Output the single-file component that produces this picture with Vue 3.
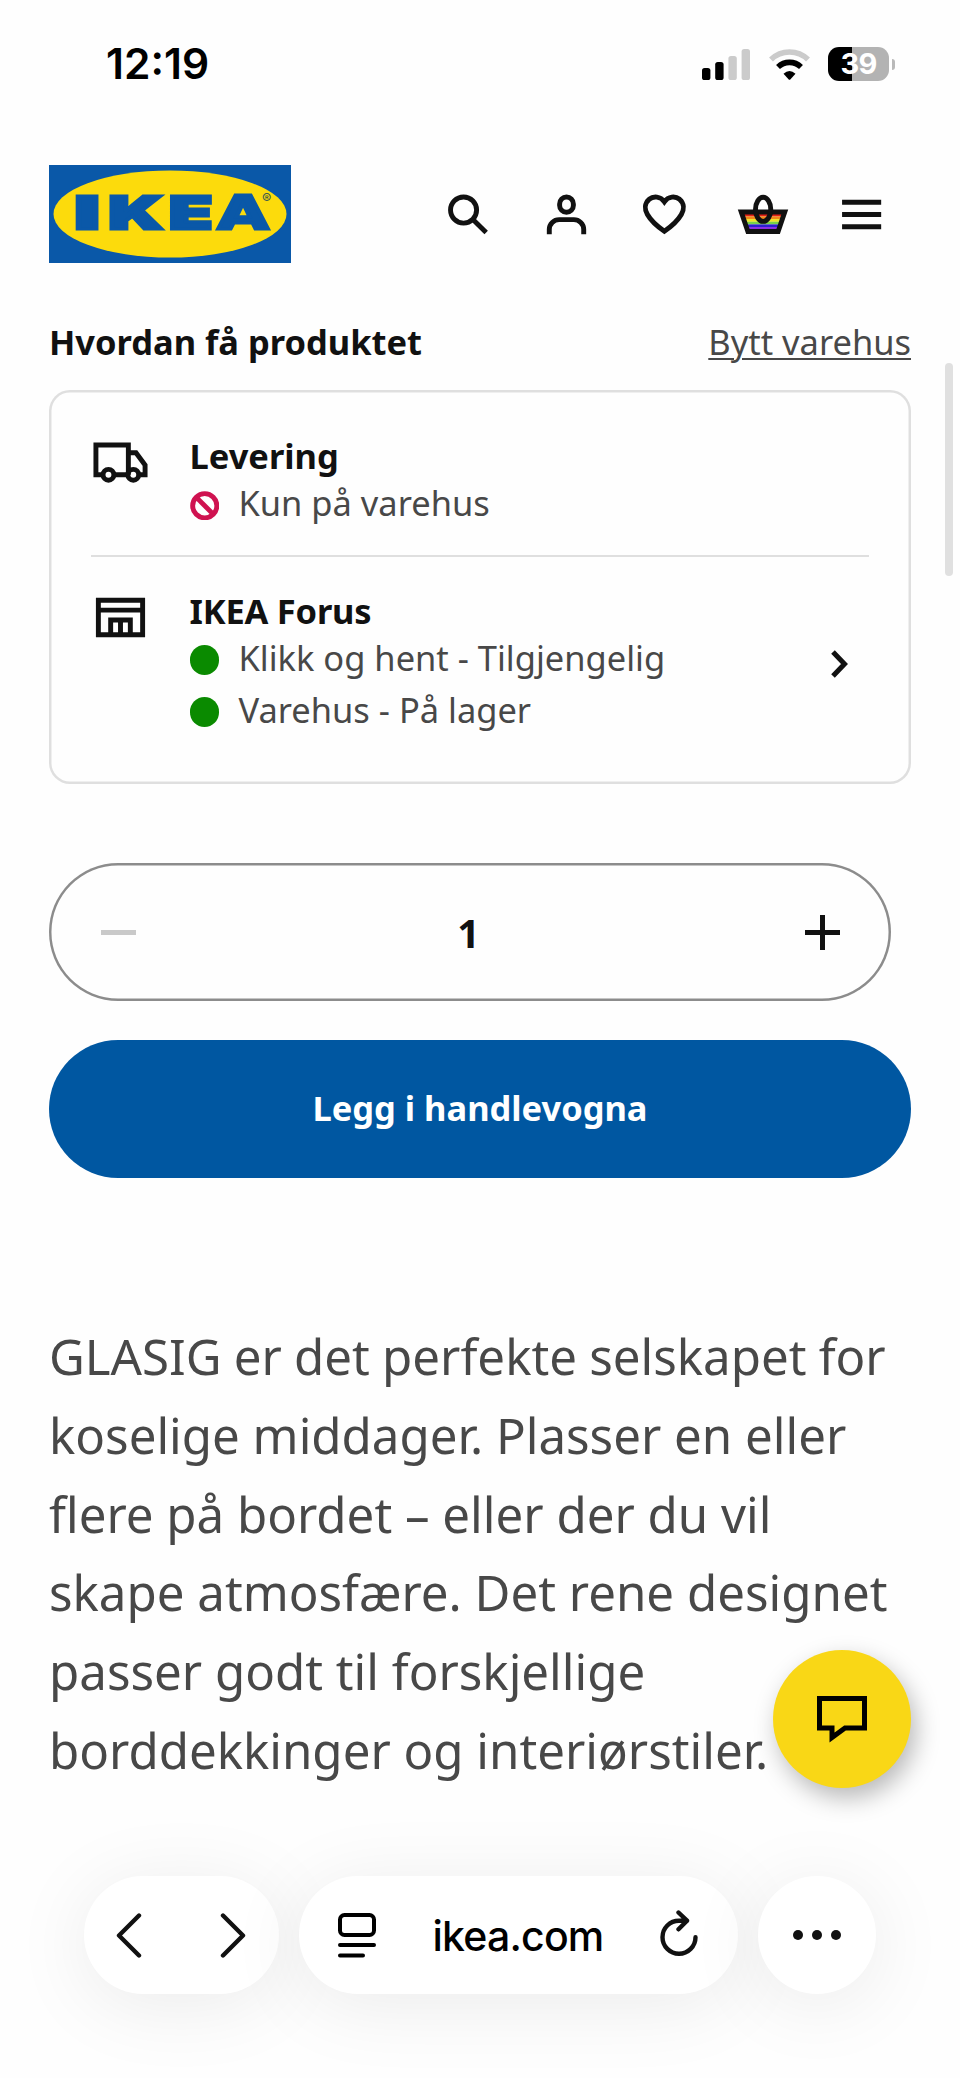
<script setup>
const stock = [
  { label: 'Klikk og hent - Tilgjengelig' },
  { label: 'Varehus - På lager' },
]
const signal = [
  { x: 0, y: 19, on: true },
  { x: 13.2, y: 13, on: true },
  { x: 26.4, y: 7, on: false },
  { x: 39.6, y: 0, on: false },
]
const logoLetters = [
  { ch: 'I', x: 25.4, w: 25.2 },
  { ch: 'K', x: 59.6, w: 54.6 },
  { ch: 'E', x: 120.1, w: 43.5 },
  { ch: 'A', x: 168.7, w: 50.6, wide: true },
]
const stripes = ['#e22016', '#f28917', '#efe524', '#78d24a', '#2c1fd0', '#8a2be2']
</script>

<template>
  <div class="screen">
    <div class="status">
      <span class="clock">12:19</span>
      <div class="status-icons">
        <svg class="signal" viewBox="0 0 48 31">
          <rect v-for="b in signal" :key="b.x" :x="b.x" :y="b.y" width="8.4" :height="31 - b.y" rx="2.6" :fill="b.on ? '#000' : '#cbcbcb'" />
        </svg>
        <svg class="wifi" viewBox="0 0 41 31">
          <path d="M2 10.5 A26.5 26.5 0 0 1 39 10.5" fill="none" stroke="#cbcbcb" stroke-width="5.6" />
          <path d="M9 18 A16.5 16.5 0 0 1 32 18" fill="none" stroke="#000" stroke-width="5.6" />
          <path d="M14.5 24.8 Q20.5 19.2 26.5 24.8 L21.5 30.2 Q20.5 31.2 19.5 30.2 Z" fill="#000" />
        </svg>
        <div class="battery">
          <div class="cell"><span>39</span></div>
          <i class="nub"></i>
        </div>
      </div>
    </div>

    <header class="header">
      <svg class="logo" viewBox="0 0 242 98">
        <rect width="242" height="98" fill="#0a58a8" />
        <ellipse cx="121" cy="49" rx="116.5" ry="43.5" fill="#fcdb0c" />
        <text
          v-for="l in logoLetters" :key="l.ch" :class="['logo-letter', { wide: l.wide }]"
          :x="l.x" y="64.4" :textLength="l.w" lengthAdjust="spacingAndGlyphs"
        >{{ l.ch }}</text>
        <text class="logo-mark" x="212.9" y="38.5">®</text>
      </svg>
      <nav class="nav">
        <svg viewBox="0 0 24 24" class="ico">
          <circle cx="10.4" cy="10.2" r="5.3" />
          <path d="M14.2 14 L19.6 19.3" />
        </svg>
        <svg viewBox="0.2 0 24 24" class="ico">
          <rect x="9.4" y="4.9" width="5.6" height="6.2" rx="2.8" />
          <path d="M5.2 20 V18 A4 4 0 0 1 9.2 14.1 H15.2 A4 4 0 0 1 19.2 18 V20" />
        </svg>
        <svg viewBox="0.25 0 24 24" class="ico">
          <path d="M12.2 6.8 C10.6 4.6 7.8 4.4 6 5.8 C4.1 7.4 4.1 9.9 5.3 12 C6.8 14.6 9.4 16.9 12.2 18.8 C15 16.9 17.6 14.6 19.1 12 C20.3 9.9 20.3 7.4 18.4 5.8 C16.6 4.4 13.8 4.6 12.2 6.8 Z" />
        </svg>
        <svg viewBox="0.35 0 24 24" class="ico">
          <defs>
            <clipPath id="basket"><path d="M3.3 11 H21 L18.3 19 H6 Z" /></clipPath>
          </defs>
          <g clip-path="url(#basket)">
            <rect v-for="(c, i) in stripes" :key="c" x="2" :y="11.7 + i * 1.08" width="20" height="1.12" :fill="c" stroke="none" />
          </g>
          <path d="M3.3 11 H21 L18.3 18.9 H6 Z" />
          <ellipse cx="12.2" cy="9.9" rx="3.1" ry="4.9" />
        </svg>
        <svg viewBox="0 0 24 24" class="ico">
          <path d="M4.1 7 H20 M4.1 12 H20 M4.1 17 H20" />
        </svg>
      </nav>
    </header>

    <main class="content">
      <div class="title-row">
        <h2>Hvordan få produktet</h2>
        <a class="change">Bytt varehus</a>
      </div>

      <section class="card">
        <div class="row">
          <svg viewBox="0 0 24 24" class="ico">
            <path d="M4.6 17 H2 V4.9 H15.2 V17 M8.8 17 H14.8 M15 8 H18.3 L22 13 V17 H20" />
            <circle cx="7.1" cy="17" r="2.2" />
            <circle cx="17.2" cy="17" r="2.2" />
          </svg>
          <div class="info">
            <h3>Levering</h3>
            <p class="line">
              <svg class="mark" viewBox="0 0 30 30">
                <circle cx="15" cy="15" r="12.3" fill="none" stroke="#cf1250" stroke-width="5" />
                <path d="M7 7 L23 23" stroke="#cf1250" stroke-width="5" />
              </svg>
              Kun på varehus
            </p>
          </div>
        </div>
        <div class="divider"></div>
        <div class="row">
          <svg viewBox="0 0 24 24" class="ico">
            <path d="M3 5 H21 V19 H3 Z M3 9 H21 M8 19 V13 H16 V19 M12 13 V19" />
          </svg>
          <div class="info">
            <h3 class="store">IKEA Forus</h3>
            <p v-for="s in stock" :key="s.label" class="line"><i class="dot"></i>{{ s.label }}</p>
          </div>
          <svg class="chevron" viewBox="0 0 18 28">
            <path d="M2 2 L13.5 14 L2 26" fill="none" stroke="#111" stroke-width="5" />
          </svg>
        </div>
      </section>

      <div class="stepper">
        <svg class="sign" viewBox="0 0 35 35"><path d="M0 17.5 H35" stroke="#c9c9c9" stroke-width="5" /></svg>
        <span>1</span>
        <svg class="sign" viewBox="0 0 35 35"><path d="M0 17.5 H35 M17.5 0 V35" stroke="#111" stroke-width="5" /></svg>
      </div>

      <button class="buy">Legg i handlevogna</button>

      <p class="desc">GLASIG er det perfekte selskapet for koselige middager. Plasser en eller flere på bordet – eller der du vil skape atmosfære. Det rene designet passer godt til forskjellige borddekkinger og interiørstiler.</p>
    </main>

    <div class="scrollbar"></div>

    <div class="chat">
      <svg viewBox="0 0 50 48">
        <path d="M2.5 2.5 H47.5 V32 H28 L15 41.5 V32 H2.5 Z" fill="none" stroke="#000" stroke-width="5" />
      </svg>
    </div>

    <div class="toolbar">
      <div class="pill arrows">
        <svg viewBox="0 0 26 45"><path d="M23 2.5 L3 22.5 L23 42.5" /></svg>
        <svg viewBox="0 0 26 45"><path d="M3 2.5 L23 22.5 L3 42.5" /></svg>
      </div>
      <div class="pill address">
        <svg class="reader" viewBox="0 0 38 45">
          <rect x="2" y="2" width="34" height="20" rx="4.5" />
          <path d="M2 32 H36 M2 42.5 H25" />
        </svg>
        <span>ikea.com</span>
        <svg class="reload" viewBox="0 0 38 46">
          <path d="M27 10.7 H19 A16.5 16.5 0 1 0 35.5 27.2 M18.5 2.5 L27 10.7 L18.5 19.3" />
        </svg>
      </div>
      <div class="pill more"><i></i><i></i><i></i></div>
    </div>
  </div>
</template>

<style>
html, body { margin: 0; background: #fefefe; }
</style>

<style scoped>
.screen {
  position: relative;
  width: 960px;
  height: 2078px;
  overflow: hidden;
  background: #fefefe;
  color: #111;
  font-family: "Noto Sans", "Liberation Sans", sans-serif;
}
h2, h3, p { margin: 0; }
.status {
  height: 128px;
  box-sizing: border-box;
  padding: 0 65px 0 106px;
  display: flex;
  align-items: center;
  justify-content: space-between;
}
.clock {
  font: 600 42.5px/50px Inter, sans-serif;
  color: #000;
}
.status-icons { display: flex; align-items: center; }
.signal { width: 48px; height: 31px; }
.wifi { width: 41px; height: 31px; margin: 0 18px 0 19px; }
.battery { display: flex; align-items: center; gap: 3px; }
.cell {
  width: 61px;
  height: 34px;
  border-radius: 11px;
  background: linear-gradient(90deg, #000 23.5px, #b3b3b3 23.5px);
  display: flex;
  align-items: center;
  justify-content: center;
  font: 700 29px/34px Inter, sans-serif;
  letter-spacing: -0.8px;
  color: #fff;
}
.nub { width: 3px; height: 11px; border-radius: 0 5px 5px 0; background: #b9b9b9; }
.header {
  height: 172px;
  box-sizing: border-box;
  padding: 37px 69px 0 49px;
  display: flex;
  align-items: flex-start;
  justify-content: space-between;
}
.logo { width: 242px; height: 98px; }
.logo-letter {
  font: 900 45.5px Inter, sans-serif;
  fill: #0a58a8;
  stroke: #0a58a8;
  stroke-width: 3;
}
.logo-letter.wide { font-family: "DejaVu Sans", sans-serif; }
.logo-mark { font: 500 14px Inter, sans-serif; fill: #3a5a50; }
.nav { display: flex; gap: 39.5px; padding-top: 19.5px; }
.ico {
  width: 59px;
  height: 59px;
  flex: none;
  fill: none;
  stroke: #111;
  stroke-width: 2;
}
.content { padding: 17px 49px 0; }
.title-row {
  display: flex;
  justify-content: space-between;
  font-size: 34.46px;
  line-height: 49px;
}
h2, h3 { font-size: 34.46px; font-weight: 700; }
.store { letter-spacing: -0.2px; }
.change {
  color: #484848;
  text-decoration: underline;
  text-decoration-thickness: 2px;
  text-underline-offset: 3px;
}
.card {
  margin-top: 24px;
  height: 394px;
  box-sizing: border-box;
  box-shadow: inset 0 0 0 2.46px #dfdfdf;
  border-radius: 21px;
  padding: 42px 42px 0;
}
.row { display: flex; align-items: flex-start; gap: 39.5px; }
.row > .ico { margin-top: 1px; }
.info { flex: 1; font-size: 34.46px; line-height: 47px; }
.line { display: flex; align-items: center; color: #484848; white-space: nowrap; }
.line + .line { margin-top: 5px; }
.mark, .dot { flex: none; width: 29.5px; height: 29.5px; margin: 5.5px 19.5px 0 0; }
.dot { border-radius: 50%; background: #0a8a00; }
.divider { height: 2px; margin: 29px 0 29.5px; background: #dfdfdf; }
.chevron { width: 18px; height: 28px; margin: 63px 20px 0 0; }
.stepper {
  width: 842px;
  height: 138px;
  box-sizing: border-box;
  margin-top: 78.5px;
  padding: 2px 51px 0 52px;
  box-shadow: inset 0 0 0 2.46px #8c8c8c;
  border-radius: 69px;
  display: flex;
  align-items: center;
  justify-content: space-between;
  font-size: 39.4px;
  font-weight: 700;
}
.stepper span { margin-left: -4px; }
.sign { width: 35px; height: 35px; }
.buy {
  display: block;
  width: 862px;
  height: 137.5px;
  margin-top: 39.5px;
  padding: 0 0 2px;
  border: 0;
  border-radius: 69px;
  background: #0057a1;
  color: #fff;
  font: 700 34.46px/49px "Noto Sans", sans-serif;
}
.desc {
  margin-top: 139.5px;
  font-size: 49.23px;
  line-height: 78.77px;
  color: #484848;
}
.desc::first-line { word-spacing: -0.6px; }
.scrollbar {
  position: absolute;
  left: 945px;
  top: 363px;
  width: 8px;
  height: 213px;
  border-radius: 4px;
  background: #e0e0e0;
}
.chat {
  position: absolute;
  left: 773px;
  top: 1649.5px;
  width: 138px;
  height: 138px;
  border-radius: 50%;
  background: #f9d716;
  box-shadow: 5px 10px 24px rgba(0, 0, 0, 0.28);
}
.chat svg { display: block; width: 50px; height: 48px; margin: 46px 0 0 44px; }
.toolbar {
  position: absolute;
  left: 84px;
  top: 1876px;
  display: flex;
  gap: 20px;
}
.pill {
  height: 118px;
  box-sizing: border-box;
  border-radius: 59px;
  background: #fff;
  box-shadow: 0 10px 80px rgba(0, 0, 0, 0.08);
  display: flex;
  align-items: center;
  justify-content: space-between;
}
.pill svg {
  fill: none;
  stroke: #111;
  stroke-width: 4.4;
  stroke-linecap: round;
  stroke-linejoin: round;
}
.arrows { width: 195px; padding: 0 33px 0 32px; }
.arrows svg { width: 26px; height: 45px; }
.address { width: 439px; padding: 0 40px 0 39px; }
.address span {
  font: 500 41px/50px Inter, sans-serif;
  letter-spacing: -0.8px;
  color: #000;
  position: relative;
  top: 1px;
}
.reader { width: 38px; height: 45px; }
.pill .reader { stroke: #000; stroke-width: 4; }
.reload { width: 38px; height: 46px; position: relative; top: -2px; }
.more { width: 118px; padding: 0 35px; }
.more i { width: 10px; height: 10px; border-radius: 50%; background: #111; }
</style>
